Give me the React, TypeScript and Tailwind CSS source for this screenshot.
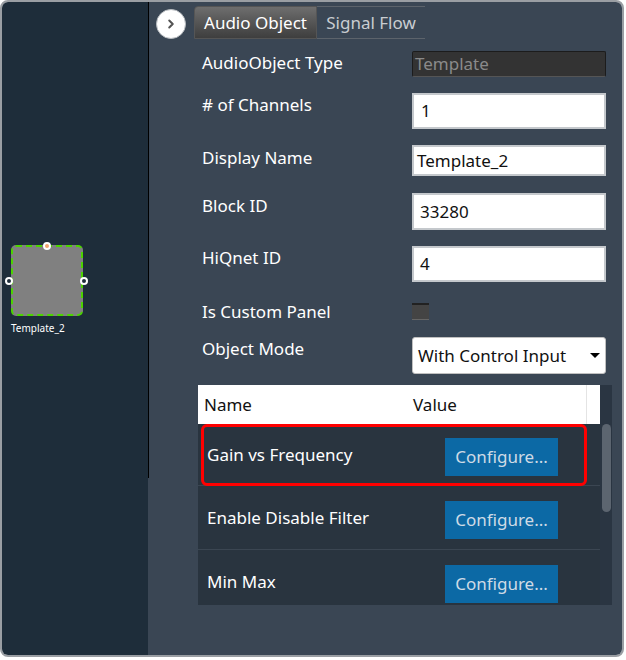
import { ChevronRight } from 'lucide-react';

const rows = [
  { name: 'Gain vs Frequency', h: 'h-[62px]', selected: true },
  { name: 'Enable Disable Filter', h: 'h-[64px]', selected: false },
  { name: 'Min Max', h: 'h-[64px]', selected: false },
];

const TextBox = ({ value, className }: { value: string; className: string }) => (
  <div className={`w-[194px] bg-white border-2 border-[#c4c8cc] flex items-center text-[17px] text-[#111] ${className}`}>
    {value}
  </div>
);

const Label = ({ children, className }: { children: React.ReactNode; className?: string }) => (
  <div className={`w-[210px] shrink-0 text-[17px] leading-[24px] text-white ${className || ''}`}>{children}</div>
);

export default function App() {
  return (
    <div className="w-[626px] h-[660px] bg-white font-['Noto_Sans',sans-serif]">
      <div className="w-[624px] h-[657px] border-2 border-[#9a9ea3] rounded-[8px] overflow-hidden flex">
        {/* canvas */}
        <div className="w-[146px] shrink-0 bg-[#1e2d3a] relative">
          <div className="absolute left-[9px] top-[243px] w-[72px] h-[71px] bg-[#808080] border-2 border-dashed border-[#4cd400] rounded-[5px]" />
          <div className="absolute left-[41px] top-[240px] w-[8px] h-[8px] rounded-full bg-[#f2a36e] border-2 border-white" />
          <div className="absolute left-[3px] top-[275px] w-[8px] h-[8px] rounded-full bg-[#1e2d3a] border-2 border-white" />
          <div className="absolute left-[78px] top-[275px] w-[8px] h-[8px] rounded-full bg-[#1e2d3a] border-2 border-white" />
          <div className="absolute left-[9px] top-[319px] text-[10px] leading-[14px] text-white">Template_2</div>
        </div>
        <div className="w-px shrink-0 flex flex-col bg-[#3a4654]">
          <div className="h-[476px] bg-black" />
        </div>

        {/* properties */}
        <div className="flex-1 bg-[#3a4654] flex flex-col">
          <div className="flex items-start pt-[4px]">
            <div className="ml-[7px] mt-[3px] w-[30px] h-[30px] rounded-full bg-white border border-[#b8bcc0] flex items-center justify-center">
              <ChevronRight className="size-[14px] text-[#555]" strokeWidth={3.5} />
            </div>
            <div className="ml-[8px] flex">
              <div className="w-[123px] h-[33px] rounded-tl-[4px] bg-gradient-to-b from-[#6e6e6e] to-[#3e3e3e] border border-[#555] flex items-center justify-center text-[17px] text-white">
                Audio Object
              </div>
              <div className="w-[108px] h-[33px] border-y border-[#5c636b] flex items-center justify-center text-[17px] text-[#c9cdd1]">
                Signal Flow
              </div>
            </div>
          </div>

          <div className="pl-[53px] flex flex-col">
            <div className="flex items-start mt-[12px]">
              <Label className="mt-[0px]">AudioObject Type</Label>
              <div className="w-[194px] h-[26px] bg-[#333] border border-[#1c1c1c] border-b-[#555] rounded-[2px] flex items-center pl-[2px] text-[17px] text-[#8a8a8a]">
                Template
              </div>
            </div>
            <div className="flex items-start mt-[16px]">
              <Label className="mt-[0px]">&#35; of Channels</Label>
              <TextBox value="1" className="h-[36px] pl-[7px]" />
            </div>
            <div className="flex items-start mt-[16px]">
              <Label className="mt-[1px]">Display Name</Label>
              <TextBox value="Template_2" className="h-[31px] pl-[3px]" />
            </div>
            <div className="flex items-start mt-[17px]">
              <Label className="mt-[1px]">Block ID</Label>
              <TextBox value="33280" className="h-[37px] pl-[6px]" />
            </div>
            <div className="flex items-start mt-[16px]">
              <Label className="mt-[0px]">HiQnet ID</Label>
              <TextBox value="4" className="h-[36px] pl-[6px]" />
            </div>
            <div className="flex items-start mt-[18px]">
              <Label>Is Custom Panel</Label>
              <div className="mt-[3px] w-[17px] h-[17px] bg-[#444] border-t-2 border-[#222] border-b border-b-[#666]" />
            </div>
            <div className="flex items-start mt-[13px]">
              <Label className="mt-[0px]">Object Mode</Label>
              <div className="w-[194px] h-[37px] bg-white border border-[#c0c0c0] rounded-[3px] flex items-center pl-[5px] pr-[5px] text-[17px] text-[#111]">
                <span className="flex-1">With Control Input</span>
                <span className="w-0 h-0 border-l-[5px] border-r-[5px] border-t-[5px] border-l-transparent border-r-transparent border-t-black" />
              </div>
            </div>
          </div>

          <div className="ml-[49px] mt-[11px] w-[414px] h-[220px] flex overflow-hidden">
            <div className="w-[402px] flex flex-col">
              <div className="h-[39px] shrink-0 bg-white flex items-center text-[17px] text-[#111] relative">
                <span className="pl-[6px] w-[215px]">Name</span>
                <span>Value</span>
                <div className="absolute right-[13px] top-0 h-full w-px bg-[#e4e4e4]" />
              </div>
              {rows.map((row) => (
                <div key={row.name} className={`${row.h} shrink-0 bg-[#29343f] border-b border-[#3b4652] flex items-center relative`}>
                  <span className="pl-[9px] w-[247px] text-[17px] text-white">{row.name}</span>
                  <div className="mt-[5px] w-[113px] h-[38px] bg-[#0c69a5] flex items-center justify-center text-[17px] text-[#cfdbe6]">
                    Configure...
                  </div>
                  {row.selected && (
                    <div className="absolute left-[3px] top-0 w-[386px] h-[62px] border-[3px] border-[#ff0000] rounded-[6px]" />
                  )}
                </div>
              ))}
            </div>
            <div className="w-[12px] bg-[#2a3542] pt-[39px] flex justify-center">
              <div className="w-[9px] h-[88px] rounded-full bg-[#5c6570]" />
            </div>
          </div>
        </div>
      </div>
    </div>
  );
}
